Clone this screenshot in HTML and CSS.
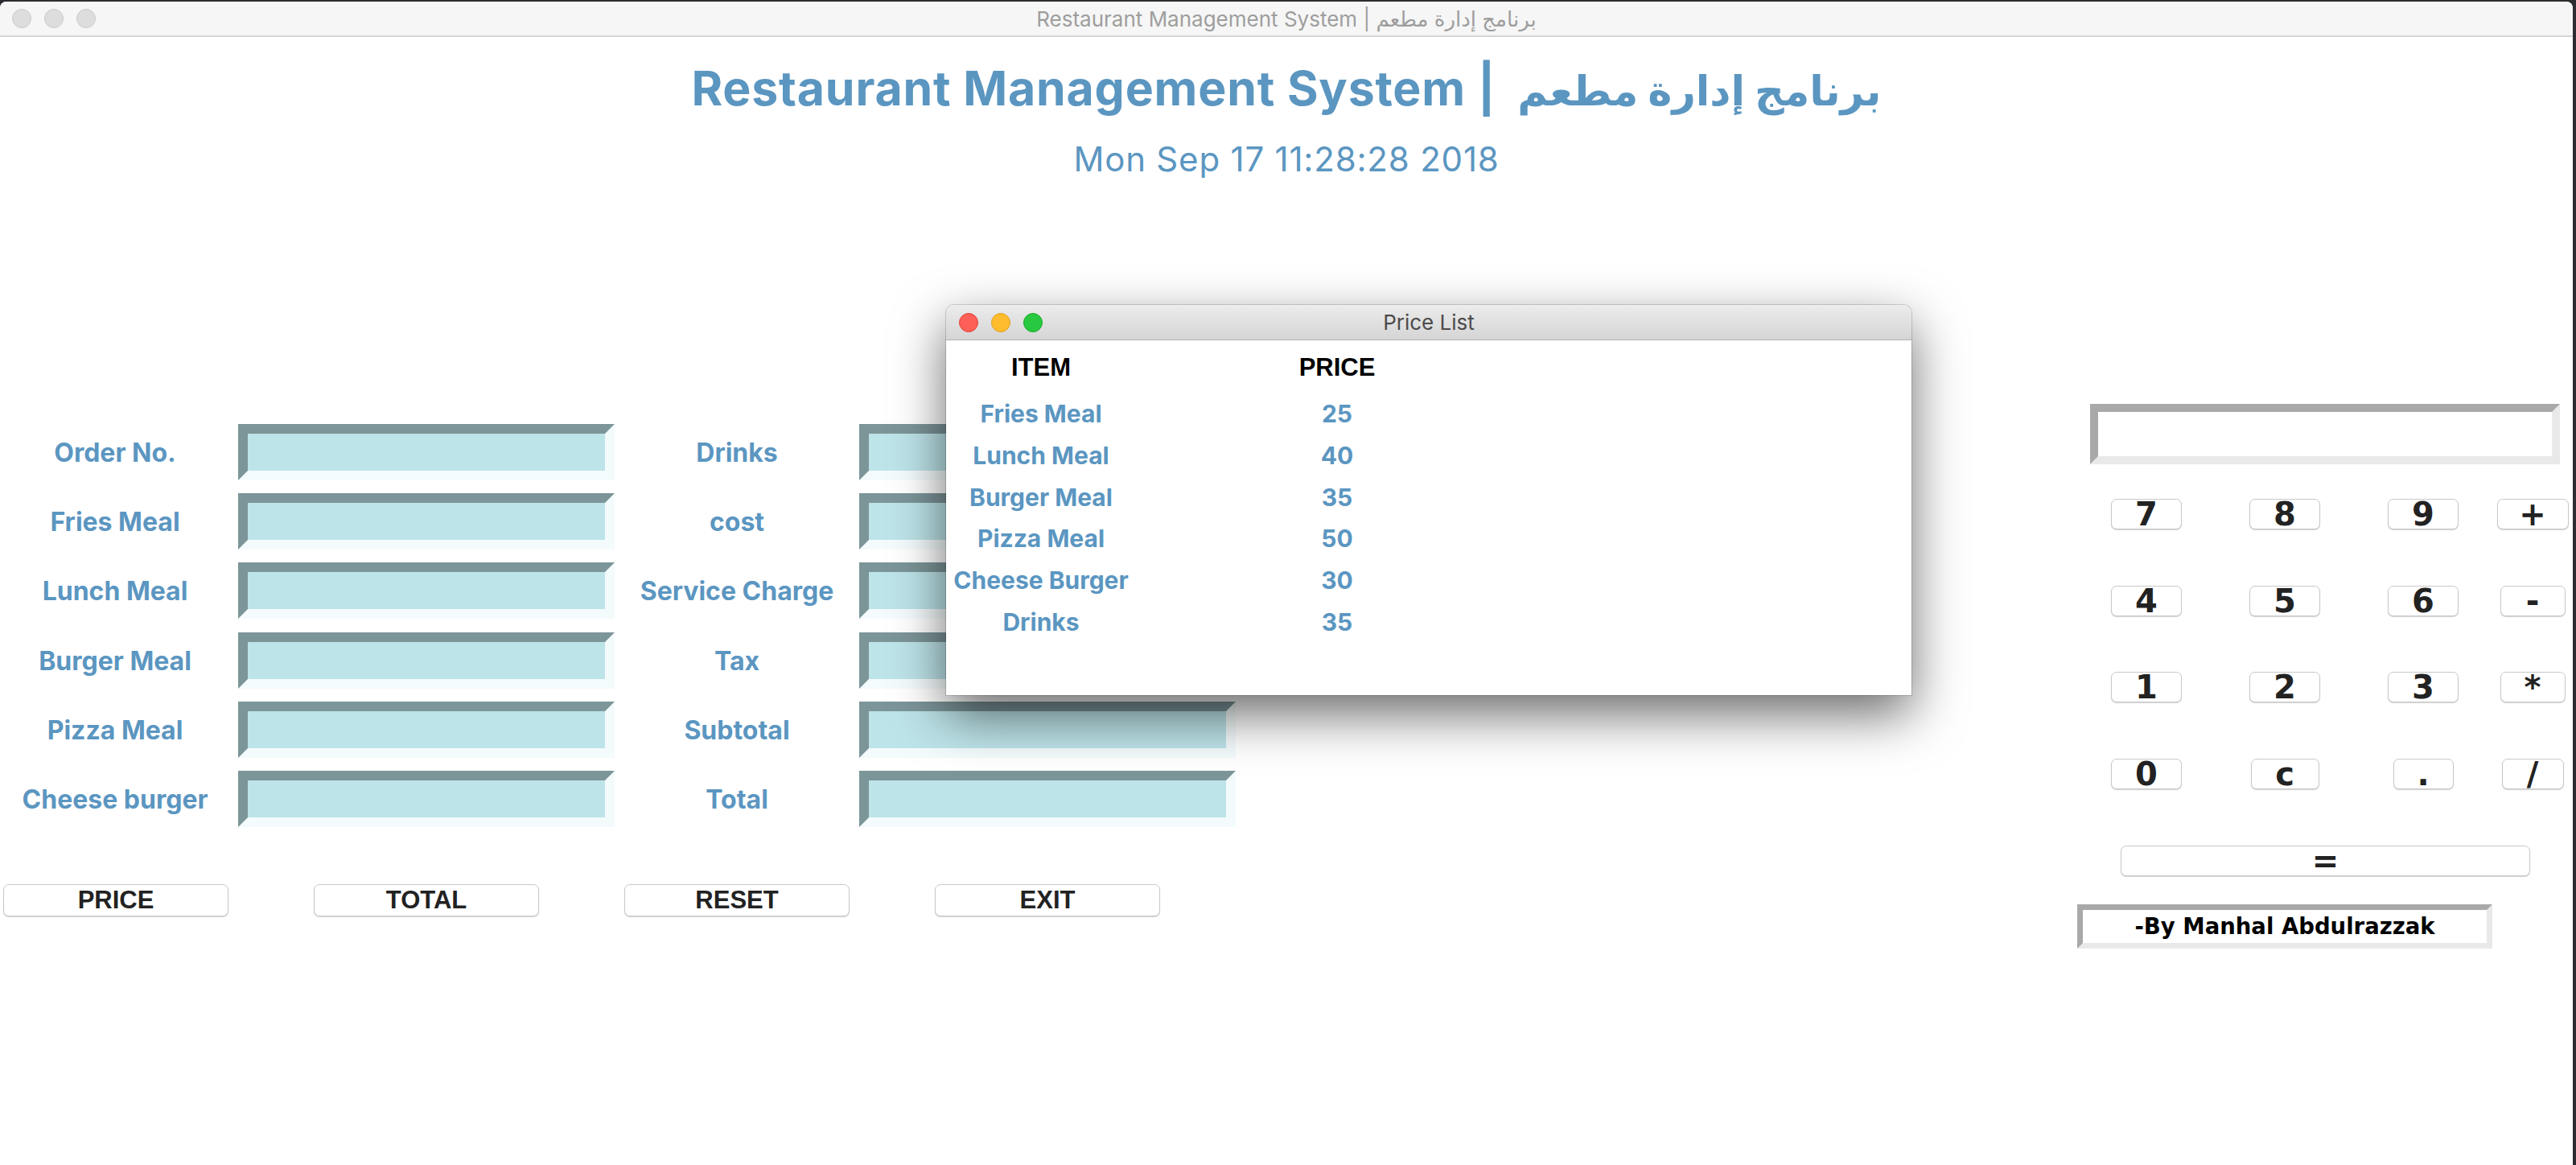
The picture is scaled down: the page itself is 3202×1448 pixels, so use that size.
FILE: index.html
```html
<!DOCTYPE html>
<html lang="en">
<head>
<meta charset="utf-8">
<title>Restaurant Management System</title>
<link rel="stylesheet" href="styles.css">
</head>
<body>
<div class="window">
  <div class="titlebar">
    <div class="lights">
      <span class="light"></span><span class="light"></span><span class="light"></span>
    </div>
    <div class="win-title">Restaurant Management System | برنامج إدارة مطعم</div>
    <div></div>
  </div>

  <div class="content">
    <header class="head">
      <h1 class="app-title">Restaurant Management System | <span class="ar" dir="rtl">برنامج إدارة مطعم</span></h1>
      <div class="date">Mon Sep 17 11:28:28 2018</div>
    </header>

    <div class="main">
      <section class="orders">
        <div class="form">
          <div class="lbl lbl-first">Order No.</div><div class="entry"></div>
          <div class="lbl">Drinks</div><div class="entry"></div>

          <div class="lbl lbl-first">Fries Meal</div><div class="entry"></div>
          <div class="lbl">cost</div><div class="entry"></div>

          <div class="lbl lbl-first">Lunch Meal</div><div class="entry"></div>
          <div class="lbl">Service Charge</div><div class="entry"></div>

          <div class="lbl lbl-first">Burger Meal</div><div class="entry"></div>
          <div class="lbl">Tax</div><div class="entry"></div>

          <div class="lbl lbl-first">Pizza Meal</div><div class="entry"></div>
          <div class="lbl">Subtotal</div><div class="entry"></div>

          <div class="lbl lbl-first">Cheese burger</div><div class="entry"></div>
          <div class="lbl">Total</div><div class="entry"></div>
        </div>
        <div class="actions">
          <button class="btn">PRICE</button>
          <button class="btn">TOTAL</button>
          <button class="btn">RESET</button>
          <button class="btn">EXIT</button>
        </div>
      </section>

      <section class="calc">
        <div class="display"></div>
        <div class="keypad">
          <button class="key">7</button><button class="key">8</button><button class="key">9</button><button class="key key-plus">+</button>
          <button class="key">4</button><button class="key">5</button><button class="key">6</button><button class="key key-op">-</button>
          <button class="key">1</button><button class="key">2</button><button class="key">3</button><button class="key key-op">*</button>
          <button class="key">0</button><button class="key key-c">c</button><button class="key key-dot">.</button><button class="key key-slash">/</button>
        </div>
        <button class="key key-eq">=</button>
        <div class="author">-By Manhal Abdulrazzak</div>
      </section>
    </div>

    <div class="price-window">
      <div class="pw-bar">
        <div class="lights pw-lights">
          <span class="light red"></span><span class="light yellow"></span><span class="light green"></span>
        </div>
        <div class="pw-title">Price List</div>
        <div></div>
      </div>
      <div class="pw-table">
        <div class="pw-th">ITEM</div><div class="pw-th">PRICE</div>
        <div class="pw-td">Fries Meal</div><div class="pw-td">25</div>
        <div class="pw-td">Lunch Meal</div><div class="pw-td">40</div>
        <div class="pw-td">Burger Meal</div><div class="pw-td">35</div>
        <div class="pw-td">Pizza Meal</div><div class="pw-td">50</div>
        <div class="pw-td">Cheese Burger</div><div class="pw-td">30</div>
        <div class="pw-td">Drinks</div><div class="pw-td">35</div>
      </div>
    </div>
  </div>
</div>
</body>
</html>
```

FILE: styles.css
```css
* { box-sizing: border-box; margin: 0; padding: 0; }

html, body { height: 100%; }

body {
  background: #2c2d31;
  font-family: "Inter", "DejaVu Sans", sans-serif;
  overflow: hidden;
}

.window {
  position: relative;
  width: 3198px;
  height: 1446px;
  margin-top: 2px;
  background: #ffffff;
  border-radius: 8px 8px 0 0;
  overflow: hidden;
}

/* ---------- window title bar ---------- */
.titlebar {
  height: 44px;
  background: #f6f6f6;
  border-bottom: 2px solid #d5d5d5;
  display: grid;
  grid-template-columns: 1fr auto 1fr;
  align-items: center;
}

.lights {
  display: flex;
  gap: 16px;
  padding-left: 15px;
}

.light {
  width: 24px;
  height: 24px;
  border-radius: 50%;
  background: #dddddd;
  border: 1px solid #cbcbcb;
}

.win-title {
  font-size: 26px;
  color: #9e9e9e;
  white-space: nowrap;
}

/* ---------- heading ---------- */
.head {
  text-align: center;
  color: #5b96c1;
}

.app-title {
  height: 99px;
  font-size: 59px;
  font-weight: 700;
  letter-spacing: 0.8px;
  line-height: 70px;
  padding-top: 29px;
  white-space: nowrap;
}

.app-title .ar {
  font-size: 51px;
  line-height: 1;
  letter-spacing: 0;
  padding-left: 12px;
}

.date {
  font-size: 42px;
  font-weight: 400;
  letter-spacing: 0.8px;
  line-height: 50px;
  margin-top: 28px;
}

/* ---------- main area ---------- */
.main {
  display: flex;
  justify-content: space-between;
  margin-top: 279px;
}

.orders {
  padding-top: 25px;
  width: 1536px;
}

.form {
  display: grid;
  grid-template-columns: 296px 468px 304px 468px;
  row-gap: 16.2px;
}

.lbl {
  height: 70px;
  line-height: 68px;
  padding-top: 2px;
  text-align: center;
  font-size: 32px;
  font-weight: 700;
  color: #5b96c1;
  white-space: nowrap;
}

.lbl-first { padding-right: 10px; }

.entry {
  height: 70px;
  background: #bde4e9;
  border: 12px solid;
  border-color: #7c9598 #f4fbfc #f4fbfc #7c9598;
}

.actions {
  display: flex;
  gap: 106px;
  padding-left: 4px;
  margin-top: 71px;
}

.btn {
  width: 280px;
  height: 40px;
  background: #ffffff;
  border: 1px solid #c9c9c9;
  border-radius: 7px;
  box-shadow: 0 1px 1px rgba(0, 0, 0, 0.18);
  font-family: "Liberation Sans", Arial, sans-serif;
  font-weight: 700;
  font-size: 31px;
  line-height: 38px;
  color: #222222;
}

/* ---------- calculator ---------- */
.calc {
  width: 616px;
  display: flex;
  flex-direction: column;
  align-items: flex-start;
}

.display {
  margin-left: 16px;
  width: 584px;
  height: 75px;
  background: #ffffff;
  border: 10px solid;
  border-color: #a9a9a9 #e9e9e9 #e9e9e9 #a9a9a9;
}

.keypad {
  margin-top: 43px;
  display: grid;
  grid-template-columns: 172px 172px 172px 100px;
  grid-auto-rows: 38px;
  row-gap: 69.7px;
  justify-items: center;
}

.key {
  width: 88px;
  height: 38px;
  background: #ffffff;
  border: 1px solid #c9c9c9;
  border-radius: 7px;
  box-shadow: 0 1px 1px rgba(0, 0, 0, 0.18);
  font-family: "DejaVu Sans", sans-serif;
  font-weight: 700;
  font-size: 40px;
  line-height: 36px;
  color: #222222;
}

.key-plus { width: 89px; }
.key-op { width: 81px; }
.key-c { width: 85px; }
.key-dot { width: 75px; }
.key-slash { width: 77px; }

.key-eq {
  width: 509px;
  margin-left: 54px;
  margin-top: 70px;
}

.author {
  margin-top: 35px;
  width: 516px;
  height: 55px;
  border: 7px solid;
  border-color: #a9a9a9 #e9e9e9 #e9e9e9 #a9a9a9;
  font-family: "DejaVu Sans", sans-serif;
  font-weight: 700;
  font-size: 27.5px;
  line-height: 40px;
  text-align: center;
  color: #000000;
  white-space: nowrap;
}

/* ---------- Price List window ---------- */
.price-window {
  position: absolute;
  left: 1176px;
  top: 377px;
  width: 1200px;
  height: 485px;
  background: #ffffff;
  border-radius: 10px 10px 0 0;
  box-shadow: 0 24px 64px rgba(0, 0, 0, 0.58), 0 0 0 1px rgba(0, 0, 0, 0.15);
}

.pw-bar {
  height: 44px;
  background: linear-gradient(#ececec, #d5d5d5);
  border-bottom: 1px solid #b3b3b3;
  border-radius: 10px 10px 0 0;
  display: grid;
  grid-template-columns: 1fr auto 1fr;
  align-items: center;
}

.pw-lights { padding-left: 16px; }

.light.red { background: #fe5f57; border-color: #e0443e; }
.light.yellow { background: #febc2e; border-color: #dea123; }
.light.green { background: #28c940; border-color: #1aab29; }

.pw-title {
  font-size: 26px;
  color: #4b4b4b;
}

.pw-table {
  display: grid;
  grid-template-columns: 236px 500px;
  text-align: center;
}

.pw-th {
  height: 66px;
  line-height: 64px;
  padding-top: 2px;
  font-family: "Liberation Sans", Arial, sans-serif;
  font-weight: 700;
  font-size: 31px;
  color: #000000;
}

.pw-td {
  height: 51.8px;
  line-height: 51.8px;
  font-weight: 700;
  font-size: 30px;
  color: #5b96c1;
  white-space: nowrap;
}
```
